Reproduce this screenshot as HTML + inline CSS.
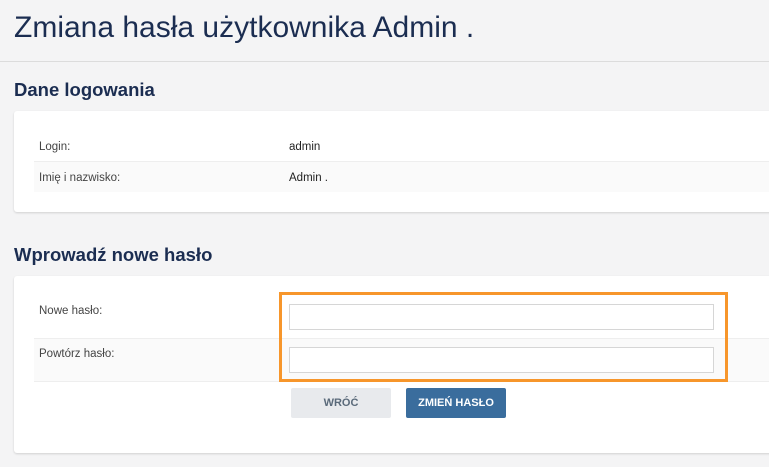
<!DOCTYPE html>
<html><head><meta charset="utf-8"><style>
*{margin:0;padding:0;box-sizing:border-box}
body{width:769px;height:467px;background:#f4f4f5;font-family:"Liberation Sans",sans-serif;position:relative;overflow:hidden;color:#333}
.a{position:absolute}
h1{position:absolute;left:14px;top:11px;font-size:30px;font-weight:normal;color:#1b2d51;letter-spacing:0;white-space:nowrap}
h2{position:absolute;left:14px;font-size:18.5px;font-weight:bold;color:#1b2d51;white-space:nowrap}
.card{position:absolute;left:14px;right:-10px;background:#fff;border-radius:3px;box-shadow:0 1px 2px rgba(0,0,0,.15)}
.lbl{position:absolute;font-size:11.5px;color:#444;white-space:nowrap}
.btn{position:absolute;top:388px;height:30px;width:100px;border-radius:2px;font-size:11px;font-weight:bold;text-align:center;line-height:30px}
</style></head><body>
<h1>Zmiana hasła użytkownika Admin .</h1>
<div class="a" style="left:0;right:0;top:61px;height:1px;background:#dcdcdc"></div>
<h2 style="top:79px">Dane logowania</h2>
<div class="card" style="top:111px;height:101px"></div>
<div class="a" style="left:34px;right:0;top:161px;height:1px;background:#eee"></div>
<div class="a" style="left:34px;right:0;top:162px;height:30px;background:#fafafa"></div>
<div class="lbl" style="left:39px;top:141px">Login:</div>
<div class="lbl" style="left:289px;top:141px;color:#222">admin</div>
<div class="lbl" style="left:39px;top:172px">Imię i nazwisko:</div>
<div class="lbl" style="left:289px;top:172px;color:#222">Admin .</div>
<h2 style="top:244px">Wprowadź nowe hasło</h2>
<div class="card" style="top:276px;height:177px"></div>
<div class="a" style="left:34px;right:0;top:338px;height:1px;background:#eee"></div>
<div class="a" style="left:34px;right:0;top:339px;height:42px;background:#fafafa"></div>
<div class="a" style="left:34px;right:0;top:381px;height:1px;background:#eee"></div>
<div class="lbl" style="left:39px;top:305px">Nowe hasło:</div>
<div class="lbl" style="left:39px;top:348px">Powtórz hasło:</div>
<div class="a" style="left:289px;top:304px;width:425px;height:26px;border:1px solid #d6d6d6;background:#fff"></div>
<div class="a" style="left:289px;top:347px;width:425px;height:26px;border:1px solid #d6d6d6;background:#fff"></div>
<div class="a" style="left:279px;top:292px;width:449px;height:90px;border:3px solid #f7962b"></div>
<div class="btn" style="left:291px;background:#e8eaed;color:#5a6a7a">WRÓĆ</div>
<div class="btn" style="left:406px;background:#3a6d9d;color:#fff">ZMIEŃ HASŁO</div>
</body></html>
